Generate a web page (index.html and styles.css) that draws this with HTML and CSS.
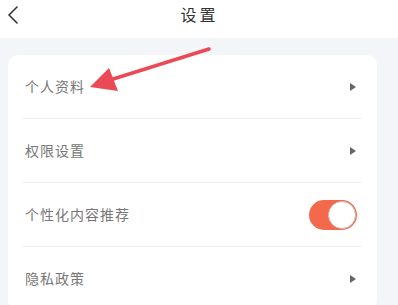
FILE: index.html
```html
<!DOCTYPE html>
<html lang="zh-CN">
<head>
  <meta charset="UTF-8" />
  <title>设置</title>
  <link rel="stylesheet" href="styles.css">
</head>
<body>
  <div class="header">
    <span class="back">
      <svg width="12" height="18" viewBox="0 0 12 18"><path d="M10 1 L2 9 L10 17" fill="none" stroke="#333" stroke-width="1.6" stroke-linecap="round" stroke-linejoin="round"/></svg>
    </span>
    <h1 class="title">设置</h1>
  </div>

  <div class="page">
    <div class="card">
      <div class="row">
        <span class="label">个人资料</span>
        <span class="arrow-right"></span>
      </div>
      <div class="row">
        <span class="label">权限设置</span>
        <span class="arrow-right"></span>
      </div>
      <div class="row">
        <span class="label">个性化内容推荐</span>
        <span class="switch on"><span class="knob"></span></span>
      </div>
      <div class="row">
        <span class="label">隐私政策</span>
        <span class="arrow-right"></span>
      </div>
    </div>
  </div>

  <!-- annotation arrow pointing at 个人资料 -->
  <svg class="pointer" width="140" height="50" viewBox="0 0 140 50">
    <path d="M129 5 L30 36" stroke="#ea4a55" stroke-width="3.5" stroke-linecap="round"/>
    <path d="M10 43 L29 24 L38 47 Z" fill="#ea4a55"/>
  </svg>
</body>
</html>
```

FILE: styles.css
```css
:root {
  --bg: #f4f5f9;
  --card: #fff;
  --text: #777;
  --title: #333;
  --line: #eeeff2;
  --accent: #f4694c;
}

body {
  margin: 0;
  font-family: "Noto Sans CJK SC", "Noto Sans", sans-serif;
  background: var(--bg);
  height: 305px;
  overflow: hidden;
}

.header {
  height: 38px;
  background: var(--card);
  display: flex;
  align-items: center;
  justify-content: center;
  position: relative;
}

.back {
  position: absolute;
  left: 7px;
  top: 5px;
}

.title {
  margin: 0;
  font-size: 16px;
  font-weight: normal;
  letter-spacing: 3px;
  color: var(--title);
  margin-top: -11px;
  margin-left: 1px;
}

.page {
  padding: 17px 21px 0 8px;
}

.card {
  background: var(--card);
  border-radius: 10px;
  padding: 0 15px;
}

.row {
  height: 63px;
  display: flex;
  align-items: center;
  justify-content: space-between;
  border-bottom: 1px solid var(--line);
  padding: 0 2px;
}

.row:last-child {
  border-bottom: none;
}

.label {
  font-size: 14px;
  letter-spacing: 1px;
  color: var(--text);
  margin-top: -2px;
}

.arrow-right {
  width: 0;
  height: 0;
  border-top: 4px solid transparent;
  border-bottom: 4px solid transparent;
  border-left: 6px solid #666;
  margin-right: 4px;
}

.switch {
  width: 48px;
  height: 30px;
  border-radius: 15px;
  background: #ddd;
  position: relative;
  margin-right: 3px;
}

.switch.on {
  background: var(--accent);
}

.knob {
  position: absolute;
  top: 1px;
  right: 1px;
  width: 26px;
  height: 26px;
  border-radius: 50%;
  background: #fff;
  border: 1px solid #c9bcbc;
}

.pointer {
  position: absolute;
  left: 80px;
  top: 44px;
}
```
